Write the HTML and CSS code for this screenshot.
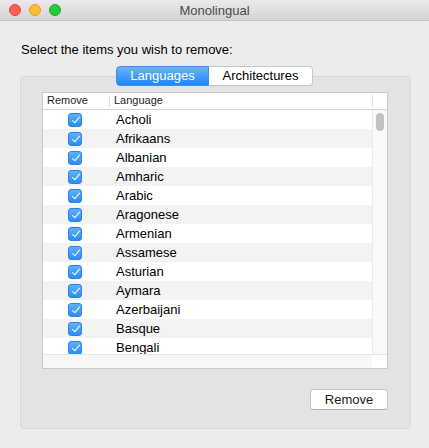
FILE: index.html
```html
<!DOCTYPE html>
<html>
<head>
<meta charset="utf-8">
<link rel="stylesheet" href="styles.css">
</head>
<body>
<div class="window">
  <div class="titlebar">
    <div class="lights">
      <span class="light red"></span>
      <span class="light yellow"></span>
      <span class="light green"></span>
    </div>
    <div class="title">Monolingual</div>
    <div></div>
  </div>
  <div class="content">
    <div class="prompt">Select the items you wish to remove:</div>
    <div class="tabs">
      <div class="seg selected">Languages</div>
      <div class="seg">Architectures</div>
    </div>
    <div class="group">
      <div class="table">
        <div class="header">
          <div class="hcell hremove">Remove</div>
          <div class="hcell hlang">Language</div>
          <div class="hcell hcorner"></div>
        </div>
        <div class="body">
          <div class="rows">
            <div class="row"><span class="cb"></span><span class="lang">Acholi</span></div>
            <div class="row"><span class="cb"></span><span class="lang">Afrikaans</span></div>
            <div class="row"><span class="cb"></span><span class="lang">Albanian</span></div>
            <div class="row"><span class="cb"></span><span class="lang">Amharic</span></div>
            <div class="row"><span class="cb"></span><span class="lang">Arabic</span></div>
            <div class="row"><span class="cb"></span><span class="lang">Aragonese</span></div>
            <div class="row"><span class="cb"></span><span class="lang">Armenian</span></div>
            <div class="row"><span class="cb"></span><span class="lang">Assamese</span></div>
            <div class="row"><span class="cb"></span><span class="lang">Asturian</span></div>
            <div class="row"><span class="cb"></span><span class="lang">Aymara</span></div>
            <div class="row"><span class="cb"></span><span class="lang">Azerbaijani</span></div>
            <div class="row"><span class="cb"></span><span class="lang">Basque</span></div>
            <div class="row"><span class="cb"></span><span class="lang">Bengali</span></div>
          </div>
          <div class="vscroll"><div class="knob"></div></div>
        </div>
        <div class="hscroll">
          <div class="htrack"></div>
          <div class="hcornerb"></div>
        </div>
      </div>
      <div class="actions">
        <div class="button">Remove</div>
      </div>
    </div>
  </div>
</div>
</body>
</html>
```
FILE: styles.css
```css
html, body {
  margin: 0;
  padding: 0;
}
body {
  width: 429px;
  height: 448px;
  overflow: hidden;
  background: #ececec;
  font-family: "Liberation Sans", Arial, sans-serif;
  color: #000;
}
.window {
  width: 429px;
  height: 448px;
  background: #ececec;
}
.titlebar {
  height: 21px;
  box-sizing: border-box;
  border-bottom: 1px solid #c4c2c4;
  background: linear-gradient(#ebe9eb, #d5d3d5);
  display: grid;
  grid-template-columns: 1fr auto 1fr;
  align-items: center;
}
.lights {
  display: flex;
  gap: 8px;
  padding-left: 9px;
  align-items: center;
}
.light {
  width: 12px;
  height: 12px;
  border-radius: 50%;
  box-sizing: border-box;
}
.red { background: #fc5f57; border: 0.5px solid #e0443e; }
.yellow { background: #fdbc2e; border: 0.5px solid #dea123; }
.green { background: #2ac840; border: 0.5px solid #1aab29; }
.title {
  font-size: 13px;
  color: #4b4b4b;
  line-height: 16px;
  padding-top: 1px;
}
.content {
  padding: 0 18px 0 20px;
}
.prompt {
  font-size: 13px;
  line-height: 16px;
  margin-top: 21px;
  padding-left: 1px;
}
.tabs {
  display: flex;
  width: max-content;
  margin-top: 8px;
  margin-bottom: -10px;
  margin-left: 96px;
  position: relative;
  z-index: 1;
}
.seg {
  height: 20px;
  box-sizing: border-box;
  font-size: 13px;
  line-height: 18px;
  text-align: center;
  background: #fff;
  border: 1px solid #c6c6c6;
}
.seg.selected {
  width: 93px;
  color: #fff;
  background: linear-gradient(#6cb3fa, #1c86fb);
  border-color: #3d8fef;
  border-radius: 4px 0 0 4px;
}
.seg:not(.selected) {
  width: 104px;
  border-left: none;
  border-radius: 0 4px 4px 0;
}
.group {
  width: 391px;
  height: 353px;
  box-sizing: border-box;
  background: #e3e3e3;
  border: 1px solid #d8d8d8;
  border-radius: 4px;
  padding: 15px 23px 0 21px;
}
.table {
  width: 346px;
  height: 277px;
  box-sizing: border-box;
  border: 1px solid #c9c9c9;
  background: #fff;
  display: flex;
  flex-direction: column;
}
.header {
  height: 16px;
  flex: none;
  display: flex;
  border-bottom: 1px solid #d4d4d4;
  background: #fff;
  font-size: 11px;
  color: #1e1e1e;
}
.hremove {
  width: 67px;
  padding-left: 4px;
  box-sizing: border-box;
  border-right: 1px solid #e0e0e0;
  margin: 2px 0;
  line-height: 11px;
}
.hlang {
  flex: 1;
  padding-left: 4px;
  border-right: 1px solid #e0e0e0;
  margin: 2px 0;
  line-height: 11px;
}
.hcorner {
  width: 14px;
}
.body {
  height: 244px;
  flex: none;
  display: flex;
  overflow: hidden;
}
.rows {
  flex: 1;
  overflow: hidden;
}
.row {
  height: 19px;
  display: flex;
  align-items: center;
}
.row:nth-child(even) {
  background: #f3f3f3;
}
.cb {
  width: 14px;
  height: 14px;
  margin-left: 25px;
  box-sizing: border-box;
  border-radius: 3px;
  background: linear-gradient(#5eb0fa, #2d8cf3);
  border: 0.5px solid #2c82e8;
  position: relative;
  flex: none;
}
.cb::after {
  content: "";
  position: absolute;
  left: 4.5px;
  top: 1.5px;
  width: 3px;
  height: 7px;
  border-right: 1.6px solid #fff;
  border-bottom: 1.6px solid #fff;
  transform: rotate(40deg);
}
.lang {
  margin-left: 34px;
  font-size: 13px;
  line-height: 16px;
}
.vscroll {
  width: 15px;
  flex: none;
  background: #f9f9f9;
  border-left: 1px solid #ececec;
  box-sizing: border-box;
  padding: 3px 3px 0 3px;
}
.knob {
  width: 8px;
  height: 18px;
  border-radius: 4px;
  background: #c1c1c1;
}
.hscroll {
  flex: 1;
  display: flex;
  border-top: 1px solid #e6e6e6;
}
.htrack {
  flex: 1;
  background: #f7f7f7;
}
.hcornerb {
  width: 15px;
  background: #fff;
}
.actions {
  display: flex;
  justify-content: flex-end;
  padding-top: 20px;
}
.button {
  width: 78px;
  height: 21px;
  box-sizing: border-box;
  border: 1px solid #c3c3c3;
  border-bottom-color: #acacac;
  border-radius: 4px;
  background: #fff;
  font-size: 13px;
  line-height: 19px;
  text-align: center;
  color: #1a1a1a;
  margin-right: -1px;
}
```
